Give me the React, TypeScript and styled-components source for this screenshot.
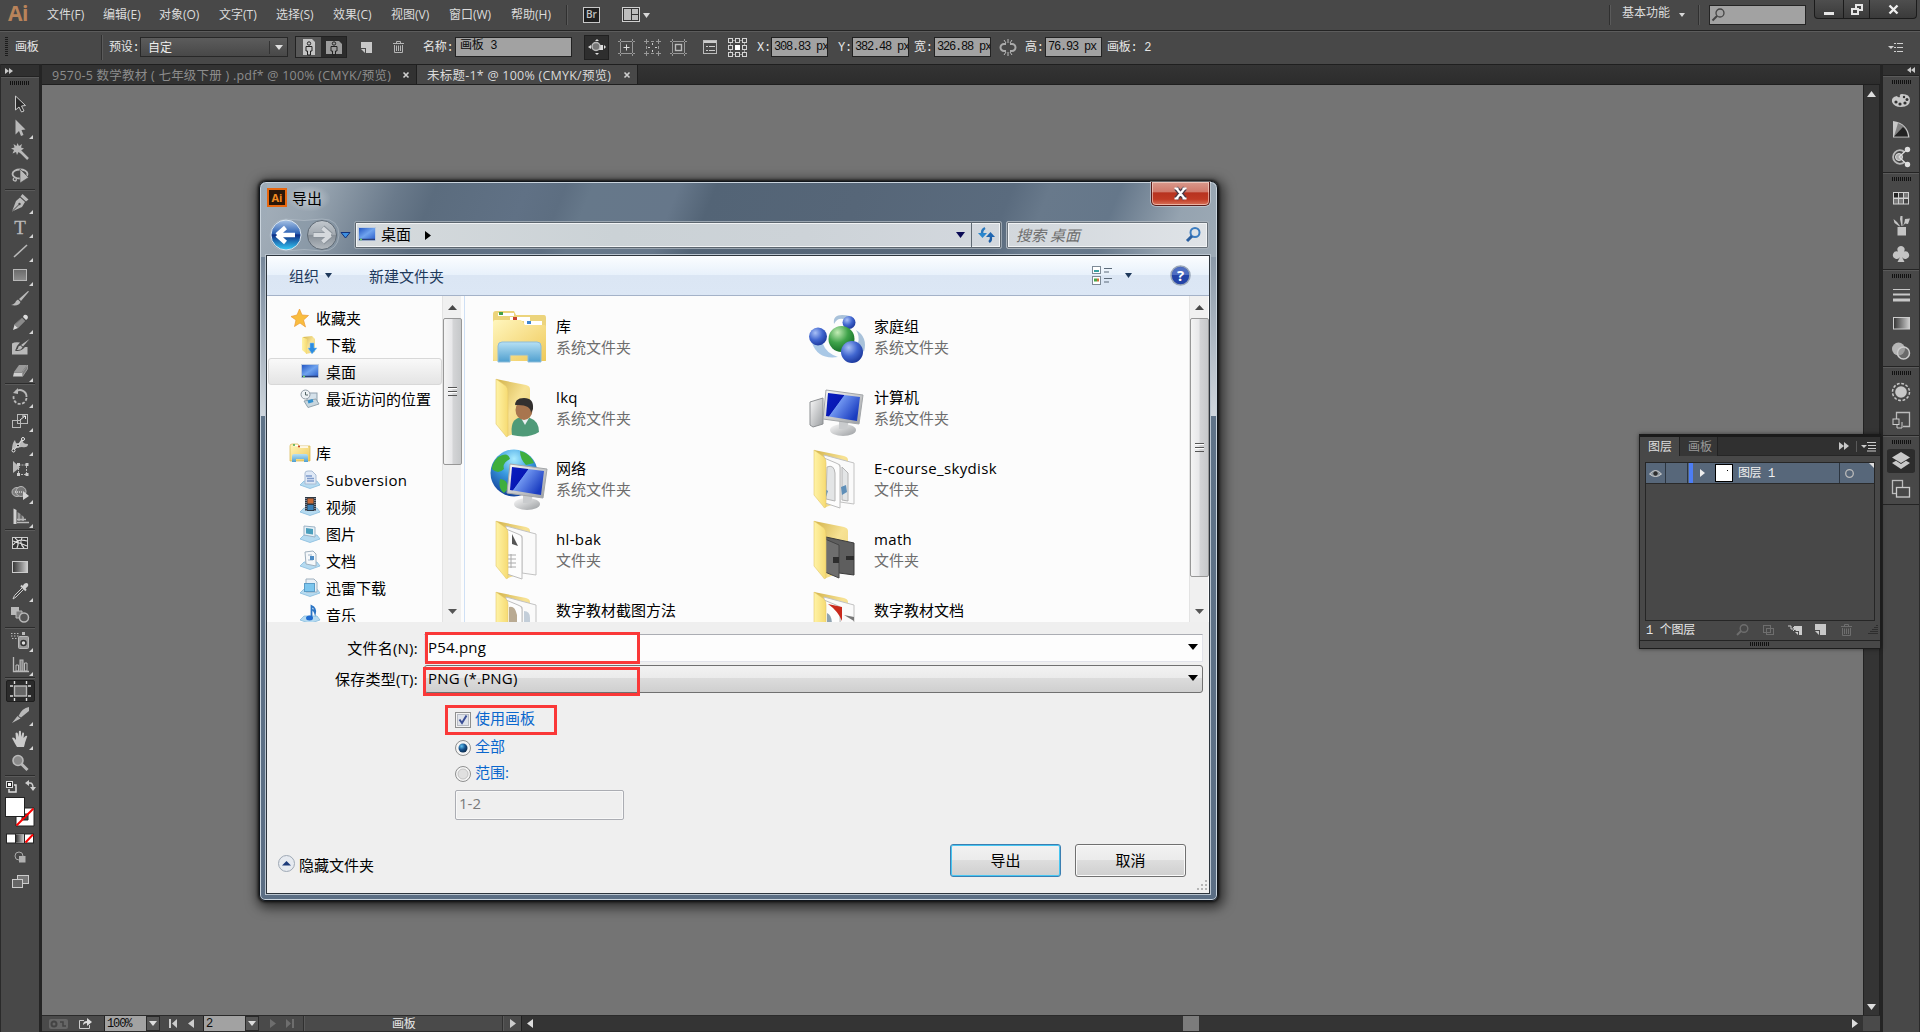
import React from "react";
import styled, { createGlobalStyle, css } from "styled-components";

const uiFont = `"Open Sans", "Noto Sans CJK SC", sans-serif`;
const pixelFont = `"Liberation Mono", "Noto Sans CJK SC", monospace`;

const GlobalStyle = createGlobalStyle`
  * { box-sizing: border-box; }
  html, body { margin: 0; padding: 0; background: #747474; overflow: hidden; }
  body { font-family: ${uiFont}; font-size: 12px; color: #d8d8d8; }
  svg { display: block; flex: none; overflow: visible; }
`;

/* ---------- shell ---------- */
const Shell = styled.div`
  width: 1920px;
  height: 1032px;
  display: flex;
  flex-direction: column;
  background: #474747;
  position: relative;
  overflow: hidden;
  white-space: nowrap;
`;
const MenuBar = styled.header`
  height: 31px;
  flex: none;
  display: flex;
  align-items: flex-start;
  background: #484848;
  border-bottom: 1px solid #242424;
`;
const Logo = styled.div`
  width: 47px;
  padding-left: 8px;
  font: 700 21px/27px "Open Sans", sans-serif;
  letter-spacing: -0.5px;
  color: #b9835a;
`;
const MenuItem = styled.div<{ $w: number; $lh?: number }>`
  width: ${(p) => p.$w}px;
  line-height: ${(p) => p.$lh ?? 30}px;
  font-size: 12px;
  color: #dcdcdc;
`;
const Divider = styled.div<{ $h?: number; $m?: string }>`
  width: 2px;
  flex: none;
  height: ${(p) => p.$h ?? 20}px;
  margin: ${(p) => p.$m ?? "0"};
  background: #303030;
  border-right: 1px solid #5a5a5a;
`;
const BridgeBadge = styled.div`
  width: 17px;
  height: 16px;
  margin: 7px 22px 0 15px;
  border: 1px solid #c8c8c8;
  background: #202020;
  color: #c4c4c4;
  font: 600 10px/13px "Open Sans", sans-serif;
  text-align: center;
`;
const Slot = styled.div<{ $w: number; $m?: string }>`
  width: ${(p) => p.$w}px;
  margin: ${(p) => p.$m ?? "0"};
  flex: none;
  display: flex;
  align-items: center;
`;
const Spacer = styled.div`
  flex: 1;
`;
const SearchBox = styled.div`
  width: 97px;
  height: 20px;
  margin: 5px 8px 0 9px;
  background: #a2a2a2;
  border: 1px solid #242424;
  padding: 2px 0 0 2px;
`;
const WindowControls = styled.div`
  width: 103px;
  height: 19px;
  margin-right: 3px;
  display: flex;
  border: 1px solid #1b1b1b;
  border-top: 0;
  border-radius: 0 0 4px 4px;
  background: linear-gradient(#4e4e4e, #3a3a3a);
`;
const WindowButton = styled.div<{ $w: number }>`
  width: ${(p) => p.$w}px;
  display: flex;
  align-items: center;
  justify-content: center;
  & + & {
    border-left: 1px solid #1b1b1b;
  }
`;

/* ---------- control bar ---------- */
const ControlBar = styled.div`
  height: 33px;
  flex: none;
  display: flex;
  align-items: center;
  padding: 0 0 2px 5px;
  border-top: 1px solid #5c5c5c;
  background: #484848;
`;
const Grip = styled.div<{ $v?: boolean }>`
  flex: none;
  ${(p) =>
    p.$v
      ? css`
          width: 3px;
          height: 20px;
          background: repeating-linear-gradient(#1c1c1c 0 1px, transparent 1px 2px);
        `
      : css`
          width: 20px;
          height: 4px;
          background: repeating-linear-gradient(90deg, #111 0 1px, transparent 1px 2px);
        `}
`;
const Label = styled.div<{ $w: number; $pl?: number }>`
  width: ${(p) => p.$w}px;
  padding-left: ${(p) => p.$pl ?? 0}px;
  padding-top: 2px;
  flex: none;
  font: 12px/16px ${pixelFont};
  letter-spacing: -0.3px;
  color: #e6e6e6;
`;
const Preset = styled.div`
  width: 148px;
  height: 20px;
  display: flex;
  align-items: center;
  border: 1px solid #282828;
  background: linear-gradient(#5c5c5c, #484848);
  color: #eee;
  padding-left: 7px;
  i {
    margin-left: auto;
    height: 13px;
    width: 18px;
    border-left: 1px solid #333;
    display: flex;
    align-items: center;
    justify-content: center;
  }
`;
const Field = styled.div<{ $w: number }>`
  width: ${(p) => p.$w}px;
  height: 20px;
  flex: none;
  border: 1px solid #222;
  background: #a2a2a2;
  color: #0c0c0c;
  font: 12px/18px ${pixelFont};
  letter-spacing: -1.2px;
  padding-left: 2px;
  overflow: hidden;
`;
const NameField = styled(Field)`
  padding-left: 4px;
  line-height: 17px;
  letter-spacing: -0.3px;
`;
const Orient = styled.div`
  width: 52px;
  height: 22px;
  margin: 0 14px 0 7px;
  display: flex;
  border: 1px solid #222;
  background: #2c2c2c;
  div {
    flex: 1;
    display: flex;
    align-items: center;
    justify-content: center;
  }
  div:first-child {
    background: #585858;
  }
`;
const DarkButton = styled.div`
  width: 25px;
  height: 25px;
  display: flex;
  align-items: center;
  justify-content: center;
  background: #2e2e2e;
  border: 1px solid #202020;
`;

/* ---------- body ---------- */
const Body = styled.div`
  flex: 1;
  min-height: 0;
  display: flex;
`;
const ToolColumn = styled.aside`
  width: 42px;
  flex: none;
  display: flex;
  flex-direction: column;
  border-left: 1px solid #2a2a2a;
  border-right: 3px solid #242424;
  background: #484848;
`;
const ColumnHead = styled.div<{ $right?: boolean }>`
  height: ${(p) => (p.$right ? 12 : 13)}px;
  flex: none;
  display: flex;
  align-items: center;
  justify-content: ${(p) => (p.$right ? "flex-end" : "flex-start")};
  padding: 0 4px;
  background: #303030;
  border-top: 1px solid #222;
  border-bottom: 1px solid #222;
`;
const GripRow = styled.div`
  height: 15px;
  flex: none;
  padding: 3px 0 0 9px;
  border-top: 1px solid #5a5a5a;
`;
const ToolCell = styled.div<{ $on?: boolean }>`
  height: 24px;
  flex: none;
  margin: 0 4px 0 5px;
  padding-right: 1px;
  display: flex;
  align-items: center;
  justify-content: center;
  position: relative;
  ${(p) => p.$on && "background:#2b2b2b; border:1px solid #1e1e1e; border-radius:2px; height:22px; margin-top:1px; margin-bottom:1px;"}
`;
const Corner = styled.i`
  position: absolute;
  right: 2px;
  bottom: 1px;
  border: 2px solid transparent;
  border-right-color: #d5d5d5;
  border-bottom-color: #d5d5d5;
`;
const ToolRule = styled.div<{ $h?: number }>`
  height: ${(p) => p.$h ?? 2}px;
  flex: none;
  margin: 0 4px;
  border-bottom: 1px solid #5a5a5a;
  background: linear-gradient(transparent calc(100% - 1px), #2c2c2c 0);
`;
const Center = styled.main`
  flex: 1;
  min-width: 0;
  display: flex;
  flex-direction: column;
`;
const TabStrip = styled.div`
  height: 21px;
  flex: none;
  display: flex;
  background: linear-gradient(#343434, #2c2c2c);
  border-top: 1px solid #1f1f1f;
  border-bottom: 1px solid #1f1f1f;
`;
const DocTab = styled.div<{ $w: number; $active?: boolean }>`
  width: ${(p) => p.$w}px;
  display: flex;
  align-items: center;
  justify-content: space-between;
  padding: 1px 7px 0 10px;
  border-right: 1px solid #1f1f1f;
  font-size: 12.5px;
  line-height: 17px;
  letter-spacing: 0.23px;
  color: ${(p) => (p.$active ? "#dadada" : "#8c8c8c")};
  background: ${(p) => (p.$active ? "#484848" : "#323232")};
`;
const Stage = styled.div`
  flex: 1;
  display: flex;
  min-height: 0;
`;
const Canvas = styled.div`
  flex: 1;
  background: #747474;
`;
const VScroll = styled.div`
  width: 17px;
  display: flex;
  flex-direction: column;
  justify-content: space-between;
  align-items: center;
  padding: 6px 0 5px;
  background: #343434;
  border: solid #222;
  border-width: 0 1px 0 1px;
`;
const StatusBar = styled.footer`
  height: 17px;
  flex: none;
  display: flex;
  align-items: center;
  border-top: 1px solid #2a2a2a;
  border-bottom: 1px solid #2a2a2a;
  background: #4a4a4a;
`;
const StatusField = styled.div`
  width: 42px;
  height: 15px;
  flex: none;
  background: #a2a2a2;
  border-left: 1px solid #222;
  color: #0c0c0c;
  font: 12px/16px ${pixelFont};
  letter-spacing: -1.1px;
  padding-left: 2px;
`;
const DropButton = styled.div`
  width: 14px;
  height: 15px;
  flex: none;
  display: flex;
  align-items: center;
  justify-content: center;
  background: #565656;
  border: 1px solid #2a2a2a;
`;
const HTrack = styled.div`
  flex: 1;
  height: 15px;
  display: flex;
  align-items: center;
  background: #343434;
  border-left: 1px solid #202020;
  padding: 0 5px;
`;
const HThumb = styled.div`
  width: 16px;
  height: 15px;
  margin-left: 650px;
  background: #7c7c7c;
`;

/* ---------- dock ---------- */
const Dock = styled.aside`
  width: 40px;
  flex: none;
  border-left: 3px solid #242424;
  border-right: 1px solid #2a2a2a;
  background: #484848;
`;
const DockGroup = styled.div`
  border-top: 1px solid #5a5a5a;
  border-bottom: 1px solid #242424;
  padding: 3px 0 1px;
`;
const DockGrip = styled.div`
  height: 7px;
  padding-left: 9px;
`;
const DockCell = styled.div<{ $on?: boolean }>`
  height: 28px;
  padding: 2px 0;
  margin: 0 4px;
  display: flex;
  align-items: center;
  justify-content: center;
  border-radius: 4px;
  background: ${(p) => (p.$on ? "#2c2c2c content-box" : "none")};
`;

/* ---------- layers panel ---------- */
const LayersPanel = styled.section`
  position: absolute;
  left: 1639px;
  top: 434px;
  width: 242px;
  height: 215px;
  display: flex;
  flex-direction: column;
  background: #484848;
  border: 1px solid #1c1c1c;
  border-top: 3px solid #1a1a1a;
  box-shadow: 0 0 4px rgba(0, 0, 0, 0.5);
`;
const PanelTabs = styled.div`
  height: 19px;
  flex: none;
  display: flex;
  align-items: center;
  background: #303030;
  border-bottom: 1px solid #262626;
  padding-right: 4px;
`;
const PanelTab = styled.div<{ $w: number; $on?: boolean }>`
  width: ${(p) => p.$w}px;
  height: 19px;
  padding-left: 8px;
  line-height: 20px;
  font-size: 12px;
  border-right: 1px solid #222;
  color: ${(p) => (p.$on ? "#dedede" : "#9a9a9a")};
  background: ${(p) => (p.$on ? "#484848" : "#363636")};
`;
const LayerList = styled.div`
  height: 159px;
  flex: none;
  margin: 6px 5px 0 5px;
  border: 1px solid #262626;
`;
const LayerRow = styled.div`
  height: 21px;
  display: flex;
  align-items: center;
  background: #57677a;
  border-bottom: 1px solid #2a2a2a;
  color: #f0f0f0;
`;
const LayerCol = styled.div<{ $w: number; $line?: boolean }>`
  width: ${(p) => p.$w}px;
  height: 20px;
  flex: none;
  display: flex;
  align-items: center;
  justify-content: center;
  border-right: ${(p) => (p.$line ? "1px solid #2c3540" : "0")};
`;
const LayerColor = styled.div`
  width: 4px;
  height: 20px;
  margin: 0 1px;
  background: #4c7df5;
`;
const Thumb = styled.div`
  width: 18px;
  height: 18px;
  background: #fff;
  border: 1px solid #000;
  padding: 5px 0 0 11px;
  &::after {
    content: "";
    display: block;
    width: 1px;
    height: 1px;
    background: #000;
  }
`;
const LayerName = styled.div`
  width: 100px;
  padding: 2px 0 0 5px;
  font: 12px/17px ${pixelFont};
  letter-spacing: -0.4px;
`;
const PanelFoot = styled.div`
  height: 19px;
  flex: none;
  display: flex;
  align-items: center;
  padding: 0 2px 2px 6px;
`;
const PanelGrip = styled.div`
  flex: 1;
  border-top: 1px solid #242424;
  padding: 1px 0 0 110px;
`;

/* ---------- export dialog ---------- */
const Dialog = styled.section`
  position: absolute;
  left: 259px;
  top: 181px;
  width: 959px;
  height: 720px;
  display: flex;
  flex-direction: column;
  padding: 0 4px;
  border: 1px solid #10151b;
  border-radius: 7px 7px 6px 6px;
  color: #000;
  font-size: 15px;
  box-shadow: inset 0 0 0 1px #c9d3dc, 0 0 3px 1px rgba(0, 0, 0, 0.8), 2px 3px 12px 4px rgba(0, 0, 0, 0.6);
  background:
    linear-gradient(#9dabb8 0, rgba(157, 171, 184, 0) 60px) 0 0 / 7px 75px no-repeat,
    linear-gradient(#76879a, #cfd6dd) 0 75px / 7px 159px no-repeat,
    linear-gradient(#8b99a8, #cfd6dd) 100% 75px / 8px 159px no-repeat,
    linear-gradient(#5f7388, #5b6e84) 0 234px / 100% 500px no-repeat,
    linear-gradient(112deg, #a5b0bb 0, #96a3af 60px, #6a7a8b 130px, #5b6c7e 165px, #607185 250px, #5d6e81 285px, #66788a 310px, #66778a 390px, #536476 425px, #566678 560px, #5a6b7e 700px, #68798b 735px, #65778a 800px, #95a3b0 865px, #a4b0ba 960px);
`;
const TitleRow = styled.div`
  height: 37px;
  flex: none;
  display: flex;
  align-items: flex-start;
  padding: 0 3px 0 3px;
`;
const AppBadge = styled.div`
  width: 20px;
  height: 19px;
  margin-top: 6px;
  background: #2a1709;
  border: 2px solid #e8670f;
  color: #f28c22;
  font: 700 11px/15px "Open Sans", sans-serif;
  text-align: center;
`;
const TitleText = styled.div`
  margin: 4px 0 0 1px;
  padding: 0 8px 0 4px;
  line-height: 25px;
  border-radius: 12px;
  background: radial-gradient(ellipse, rgba(255, 255, 255, 0.42), rgba(255, 255, 255, 0) 75%);
`;
const CloseButton = styled.div`
  width: 59px;
  height: 24px;
  margin-left: auto;
  display: flex;
  align-items: center;
  justify-content: center;
  border: 1px solid #5b1c1a;
  border-top: 0;
  border-radius: 0 0 5px 5px;
  box-shadow: inset 0 0 0 1px rgba(255, 235, 225, 0.55), 0 0 0 1px rgba(255, 255, 255, 0.35);
  background: linear-gradient(#d9998c 0, #cf7768 45%, #b7321f 46%, #c03a24 75%, #d8735a 100%);
`;
const NavRow = styled.div`
  height: 36px;
  flex: none;
  display: flex;
  align-items: center;
  padding-bottom: 4px;
`;
const Address = styled.div`
  width: 648px;
  height: 28px;
  margin-left: 1px;
  display: flex;
  align-items: center;
  border: 1px solid #9aa5b0;
  box-shadow: inset 0 0 0 1px #5c666f, inset 0 0 0 2px #f1f3f5;
  background: linear-gradient(90deg, #d5dadd 0, #cbd2d6 40%, #cdd3d8 70%, #d3d8de);
  padding-left: 2px;
  border-radius: 2px;
`;
const AddressText = styled.div`
  width: 44px;
  margin-left: 4px;
  padding-bottom: 3px;
`;
const Refresh = styled.div`
  width: 30px;
  height: 26px;
  display: flex;
  align-items: center;
  justify-content: center;
  border-left: 1px solid #606a73;
`;
const SearchField = styled.div`
  flex: 1;
  height: 28px;
  margin: 0 4px 0 4px;
  display: flex;
  align-items: center;
  justify-content: space-between;
  padding: 0 7px 1px 9px;
  border: 1px solid #aab3bc;
  box-shadow: inset 0 0 0 1px #6a737c, inset 0 0 0 2px #f1f3f5;
  background: linear-gradient(90deg, #d2d7dc, #dfe3e7);
  color: #6e6e6e;
  font-style: italic;
  border-radius: 2px;
`;
const Client = styled.div`
  height: 639px;
  flex: none;
  display: flex;
  flex-direction: column;
  margin: 0 3px 0 2px;
  border: 1px solid #2c343c;
  outline: 1px solid #b9c4cf;
  background: #efefef;
`;
const CommandBar = styled.div`
  height: 40px;
  flex: none;
  display: flex;
  align-items: center;
  padding: 0 19px 0 22px;
  color: #1e395b;
  background: linear-gradient(#fbfdff 0, #e8f1fb 48%, #dbe6f4 49%, #dce7f5 100%);
  border-bottom: 1px solid #a4b2c8;
`;
const Explorer = styled.div`
  height: 326px;
  flex: none;
  display: flex;
  background: #fcfcfc;
  overflow: hidden;
`;
const NavPane = styled.div`
  width: 176px;
  flex: none;
  padding: 8px 1px 0 1px;
`;
const NavItem = styled.div<{ $root?: boolean; $on?: boolean; $top?: number }>`
  height: 27px;
  margin-top: ${(p) => p.$top ?? 0}px;
  display: flex;
  align-items: center;
  gap: 6px;
  padding-left: ${(p) => (p.$root ? 21 : 31)}px;
  border-radius: 3px;
  border: 1px solid ${(p) => (p.$on ? "#d8d8d8" : "transparent")};
  background: ${(p) => (p.$on ? "linear-gradient(#f9f9f9,#e4e4e4)" : "none")};
`;
const Name = styled.div<{ $latin: boolean }>`
  letter-spacing: ${(p) => (p.$latin ? "0.35px" : "0")};
`;
const ScrollBar = styled.div`
  width: 19px;
  flex: none;
  display: flex;
  flex-direction: column;
  align-items: center;
  background: #f0f0f0;
  border-left: 1px solid #e3e3e3;
  margin-left: -1px;
  margin-right: 1px;
`;
const ScrollArrow = styled.div`
  height: 22px;
  display: flex;
  align-items: center;
`;
const ScrollThumb = styled.div<{ $h: number }>`
  height: ${(p) => p.$h}px;
  width: 19px;
  flex: none;
  display: flex;
  align-items: center;
  justify-content: center;
  border: 1px solid #979797;
  border-radius: 2px;
  background: linear-gradient(90deg, #f4f4f4 0, #e8e8ea 45%, #d3d4d6 55%, #c6c8ca 100%);
`;
const FilePane = styled.div`
  flex: 1;
  margin-left: 2px;
  border-left: 1px solid #cfe0f5;
  display: grid;
  grid-template-columns: 318px 1fr;
  grid-auto-rows: 71px;
  padding: 6px 0 0 20px;
`;
const FileItem = styled.div`
  display: flex;
  height: 71px;
  padding-top: 5px;
`;
const FileText = styled.div`
  margin-left: 8px;
  padding-top: 9px;
  line-height: 21px;
`;
const Kind = styled.div`
  color: #6d6d6d;
`;
const Form = styled.div`
  flex: 1;
  padding: 12px 6px 0 0;
  display: flex;
  flex-direction: column;
`;
const FormRow = styled.div`
  display: flex;
  height: 31px;
  align-items: flex-start;
`;
const FormLabel = styled.div`
  width: 151px;
  margin-right: 6px;
  line-height: 28px;
  letter-spacing: 0.25px;
  text-align: right;
`;
const Combo = styled.div<{ $shaded?: boolean }>`
  flex: 1;
  height: 28px;
  display: flex;
  align-items: center;
  justify-content: space-between;
  padding: 0 4px 2px 3px;
  letter-spacing: 0.2px;
  position: relative;
  ${(p) =>
    p.$shaded
      ? css`
          border: 1px solid #707070;
          border-radius: 3px;
          background: linear-gradient(#f2f2f2 0, #ebebeb 46%, #dcdcdc 47%, #cfcfcf 100%);
        `
      : css`
          border: 1px solid #e2e3ea;
          border-top-color: #abadb3;
          background: #fdfdfd;
        `}
`;
const Mark = styled.span<{ $x: number; $y: number; $w: number; $h: number }>`
  position: absolute;
  left: ${(p) => p.$x}px;
  top: ${(p) => p.$y}px;
  width: ${(p) => p.$w}px;
  height: ${(p) => p.$h}px;
  border: 3px solid #fa3838;
`;
const Options = styled.div`
  padding: 12px 0 0 188px;
  display: flex;
  flex-direction: column;
  align-items: flex-start;
`;
const Option = styled.div<{ $h: number }>`
  height: ${(p) => p.$h}px;
  display: flex;
  align-items: flex-start;
  gap: 4px;
  color: #0a67cd;
  line-height: 20px;
  position: relative;
  svg {
    margin-top: 4px;
  }
`;
const RangeInput = styled.div`
  width: 169px;
  height: 30px;
  margin-top: 1px;
  border: 1px solid #abadb3;
  border-radius: 2px;
  box-shadow: inset 0 0 0 1px #f8f8f8;
  color: #7a7a7a;
  line-height: 25px;
  padding-left: 3px;
`;
const Actions = styled.div`
  display: flex;
  margin-top: 24px;
  padding: 0 17px 0 11px;
  align-items: flex-start;
`;
const HideToggle = styled.div`
  display: flex;
  align-items: center;
  gap: 4px;
  padding-top: 10px;
  margin-right: auto;
  line-height: 22px;
  svg {
    margin-top: -3px;
  }
`;
const PushButton = styled.div<{ $primary?: boolean }>`
  width: 111px;
  height: 33px;
  margin-left: 14px;
  line-height: 30px;
  text-align: center;
  border-radius: 3px;
  border: 1px solid ${(p) => (p.$primary ? "#3c7fb1" : "#707070")};
  box-shadow: inset 0 0 0 1px ${(p) => (p.$primary ? "#47c6f2" : "#fafafa")};
  background: linear-gradient(#f2f2f2 0, #ebebeb 49%, #dddddd 50%, #cfcfcf 100%);
`;
const SizeGrip = styled.div`
  display: flex;
  justify-content: flex-end;
  margin: 3px -5px 0 0;
`;

/* ---------- icons ---------- */
type IconProps = { w?: number; h?: number; vb?: string; children: React.ReactNode };
const Icon = ({ w = 20, h = 20, vb, children }: IconProps) => (
  <svg width={w} height={h} viewBox={vb ?? `0 0 ${w} ${h}`} fill="none" stroke="none">
    {children}
  </svg>
);
const Tri = ({ dir = "down", s = 7, c = "#d8d8d8" }: { dir?: "down" | "up" | "left" | "right"; s?: number; c?: string }) => {
  const h = Math.ceil(s / 2) + 1;
  const v = dir === "left" || dir === "right";
  const d = {
    down: `M0 0H${s}L${s / 2} ${h}Z`,
    up: `M0 ${h}H${s}L${s / 2} 0Z`,
    left: `M${h} 0V${s}L0 ${s / 2}Z`,
    right: `M0 0V${s}L${h} ${s / 2}Z`,
  }[dir];
  return (
    <Icon w={v ? h : s} h={v ? s : h}>
      <path d={d} fill={c} />
    </Icon>
  );
};
const Cross = ({ s = 7, c = "#d0d0d0", w = 1.6 }) => (
  <Icon w={s} h={s}>
    <path d={`M.5 .5L${s - 0.5} ${s - 0.5}M${s - 0.5} .5L.5 ${s - 0.5}`} stroke={c} strokeWidth={w} />
  </Icon>
);
const G = "#b9b9b9";

const Defs = styled.svg`
  position: absolute;
`;
const Gradients = () => (
  <Defs width="0" height="0">
    <defs>
      <linearGradient id="gFolder" x1="0" y1="0" x2="1" y2="1"><stop offset="0" stopColor="#fff6bd" /><stop offset="1" stopColor="#efc95a" /></linearGradient>
      <linearGradient id="gFlap" x1="0" y1="0" x2="1" y2="0"><stop offset="0" stopColor="#fff3a6" /><stop offset="1" stopColor="#f6db73" /></linearGradient>
      <linearGradient id="gBack" x1="0" y1="0" x2="1" y2="1"><stop offset="0" stopColor="#d2b24a" /><stop offset=".5" stopColor="#f7e294" /><stop offset="1" stopColor="#ecd27a" /></linearGradient>
      <linearGradient id="gBlueTray" x1="0" y1="0" x2="0" y2="1"><stop offset="0" stopColor="#b6e0f4" /><stop offset="1" stopColor="#4f9fcf" /></linearGradient>
      <linearGradient id="gScreen" x1="0" y1="0" x2="1" y2=".6"><stop offset="0" stopColor="#0a1ec0" /><stop offset=".42" stopColor="#0718b4" /><stop offset=".44" stopColor="#6f95f0" /><stop offset="1" stopColor="#1a3cc0" /></linearGradient>
      <linearGradient id="gSky" x1="0" y1="0" x2="1" y2="1"><stop offset="0" stopColor="#2357c4" /><stop offset=".5" stopColor="#6fa3ee" /><stop offset="1" stopColor="#2c5fcb" /></linearGradient>
      <linearGradient id="gSilver" x1="0" y1="0" x2="1" y2="1"><stop offset="0" stopColor="#fafafa" /><stop offset="1" stopColor="#9a9da0" /></linearGradient>
      <linearGradient id="gGrey" x1="0" y1="0" x2="1" y2="0"><stop offset="0" stopColor="#333" /><stop offset="1" stopColor="#cfcfcf" /></linearGradient>
      <linearGradient id="gTool" x1="0" y1="0" x2="0" y2="1"><stop offset="0" stopColor="#6a6a6a" /><stop offset="1" stopColor="#8d8d8d" /></linearGradient>
      <linearGradient id="gBackBtn" x1="0" y1="0" x2="0" y2="1"><stop offset="0" stopColor="#a9c4e6" /><stop offset=".45" stopColor="#2d62b4" /><stop offset=".5" stopColor="#0f2f86" /><stop offset="1" stopColor="#35cdf8" /></linearGradient>
      <linearGradient id="gFwdBtn" x1="0" y1="0" x2="0" y2="1"><stop offset="0" stopColor="#c3c9cf" /><stop offset=".48" stopColor="#a2a9b0" /><stop offset=".5" stopColor="#878f97" /><stop offset="1" stopColor="#b4bac0" /></linearGradient>
      <radialGradient id="gBall" cx=".35" cy=".3" r=".8"><stop offset="0" stopColor="#a8c0f6" /><stop offset=".5" stopColor="#4166cf" /><stop offset="1" stopColor="#142f93" /></radialGradient>
      <radialGradient id="gGreen" cx=".35" cy=".25" r=".8"><stop offset="0" stopColor="#c2ecb5" /><stop offset=".5" stopColor="#3fa34a" /><stop offset="1" stopColor="#126a25" /></radialGradient>
      <radialGradient id="gGlobe" cx=".5" cy=".2" r=".9"><stop offset="0" stopColor="#a9ecff" /><stop offset=".4" stopColor="#3a9be0" /><stop offset="1" stopColor="#0b2f8c" /></radialGradient>
      <radialGradient id="gRadio" cx=".35" cy=".3" r=".8"><stop offset="0" stopColor="#5fc0f0" /><stop offset=".5" stopColor="#14508c" /><stop offset="1" stopColor="#0a2340" /></radialGradient>
    </defs>
  </Defs>
);

const tools: { i?: React.ReactNode; more?: boolean; on?: boolean; rule?: number }[] = [
  { i: <path d="M5.500 2V16L9 13L11.500 18L14 17L11.500 12L15.500 11.500Z" fill="#2c2c2c" stroke="#c9c9c9" /> },
  { i: <path d="M5.500 1.500V16.500L9 13L11 18L13.500 17L11.500 12L15.500 11.500Z" fill={G} />, more: true },
  { i: <><path d="M7.500 1L9 4L12 2L11 5.500L14 6.500L11 8.500L12 12L8.500 10L7 13L6 10L2.500 11.500L4 8L1 6.500L4.500 5.500L3.500 2L6.500 4Z" fill={G} /><path d="M10 9L18 17" stroke={G} strokeWidth="2.500" /></> },
  { i: <><ellipse cx="10" cy="8" rx="7.500" ry="4.500" stroke={G} strokeWidth="1.800" /><path d="M4 12Q2 14 5 15Q7 15 6 12" stroke={G} strokeWidth="1.300" /><path d="M10 3V17L18.500 11.500Z" fill={G} stroke="#484848" strokeWidth=".6" /></> },
  { rule: 3 },
  { i: <><path d="M12.500 1L18.500 6.500L16 8.500L10.500 3.500ZM10 4.500L15 9L12 14L2 18.500L6 8Z" fill={G} /><path d="M2.500 18L9 11.500" stroke="#484848" /><circle cx="9.500" cy="11" r="1.200" fill="#484848" /></>, more: true },
  { i: <text x="10" y="16.500" textAnchor="middle" fontFamily="Liberation Serif" fontSize="19" fill={G} stroke={G} strokeWidth=".3">T</text>, more: true },
  { i: <path d="M4 16L17 4" stroke={G} strokeWidth="1.600" />, more: true },
  { i: <rect x="3.500" y="4.500" width="13" height="11" fill="url(#gTool)" stroke={G} />, more: true },
  { i: <path d="M19 2.500L11 12L9 10L18 2ZM8 10.500L10.500 13Q9 17.500 1 16Q5 15 6 12Z" fill={G} /> },
  { i: <><path d="M14 2Q17 1 18 4Q18 6 16 7L13 4Z" fill="#dcdcdc" /><path d="M12 5L15 8L8 15L4 12Z" fill="#8a8a8a" stroke="#777" /><path d="M4.500 12L8 15L3 17Z" fill="#dcdcdc" /></>, more: true },
  { i: <><path d="M2 6.500Q5 4.500 10 5.500L7 9Q6 12 5 13.500Q9 15 13 12L15 10H17.500V17.500H2Z" fill={G} /><path d="M19.500 2L13 9.500L11 8ZM10.500 8.500L12.500 10.500Q11 13.500 6.500 13Q8.500 11.500 8.500 9.500Z" fill={G} /></> },
  { i: <><path d="M9 4H17L12 11H4Z" fill="#9a9a9a" /><path d="M4 11.500H12V15.500H3Z" fill="#cfcfcf" /><path d="M12.500 11L17.500 4V8L12.500 15.500Z" fill="#7c7c7c" stroke={G} strokeWidth=".6" /></>, more: true },
  { rule: 2 },
  { i: <><path d="M6 4.500A6.500 6.500 0 0 1 16.500 10" stroke={G} strokeWidth="1.800" /><path d="M16.500 11A6.500 6.500 0 1 1 4 8" stroke={G} strokeWidth="1.800" strokeDasharray="3 1.500" /><path d="M3 6L8 1V7Z" fill={G} /></>, more: true },
  { i: <><rect x="7.500" y="3.500" width="10" height="9" stroke={G} /><rect x="2.500" y="9.500" width="8" height="7" stroke={G} /><path d="M10 9L15 5M12 5H15.500V8" stroke="#eee" /></>, more: true },
  { i: <><path d="M2 15Q2 8 5 5Q6 10 9 8Q11 3 13 5Q12 9 18 9Q18 13 12 12Q8 12 2 15Z" fill={G} /><path d="M4 15L13 4" stroke="#ddd" /><circle cx="3.500" cy="15.500" r="1.500" fill="#333" stroke="#eee" /><circle cx="8" cy="10.500" r="1.500" fill="#333" stroke="#eee" /><circle cx="13" cy="4" r="1.500" fill="#333" stroke="#eee" /></>, more: true },
  { i: <><path d="M3 2V14L10 8.500Z" fill={G} /><rect x="8.500" y="6" width="8" height="9.500" stroke={G} strokeDasharray="2 1" /><path d="M7 4H10V7H7ZM15.500 4H18.500V7H15.500ZM7 14H10V17H7ZM15.500 14H18.500V17H15.500Z" fill="#ccc" /></> },
  { i: <><ellipse cx="7" cy="9" rx="5" ry="4.500" fill="#7d7d7d" stroke={G} /><circle cx="11" cy="8.500" r="5" fill="#777" stroke={G} /><path d="M5 9H13" stroke="#fff" strokeDasharray="1 1" /><path d="M13 8V17L19 13Z" fill="#d5d5d5" /></>, more: true },
  { i: <><path d="M3.500 1.500V17H6.500V3Z" fill="#d0d0d0" /><path d="M7.500 5V14H10.500V7ZM11.500 8V14H14V10Z" fill="#9a9a9a" /><path d="M7 15.500H19M7 12.500H16" stroke={G} strokeWidth="1.500" /></>, more: true },
  { rule: 2 },
  { i: <><rect x="2.500" y="4.500" width="15" height="11" fill="#333" stroke="#ccc" /><path d="M3 12Q8 5 17 8M5 5Q10 8 7 15M12 5Q9 10 14 15M3 8Q10 10 17 13" stroke="#e0e0e0" strokeWidth="1.200" /></> },
  { i: <rect x="2.500" y="4.500" width="15" height="11" fill="url(#gGrey)" stroke="#ccc" /> },
  { i: <><path d="M12.500 5.500L14 3Q17 1 18 3Q19 5 16 7L15 9Z" fill="#d0d0d0" /><path d="M11 4.500L16 9.500" stroke="#d0d0d0" strokeWidth="2" /><path d="M12 7L4.500 14.500L3 18L6 16L13.500 8.500" stroke="#ccc" /></>, more: true },
  { i: <><rect x="1" y="2" width="8" height="8" fill={G} /><path d="M6 6H12V13H6Z" fill="#7c7c7c" stroke={G} /><circle cx="14" cy="12.500" r="4.500" fill="#555" stroke={G} strokeWidth="1.500" /></> },
  { rule: 2 },
  { i: <><path d="M1 2.500H10M1 5H10M2 7.500H7" stroke={G} strokeDasharray="1.500 1.500" /><path d="M12 1H15V4H12Z" fill={G} /><rect x="8.500" y="5.500" width="10" height="12" rx="1" fill="#999" stroke={G} /><circle cx="13.500" cy="12" r="2.500" fill="#ddd" stroke="#333" strokeWidth="1.500" /></>, more: true },
  { i: <><path d="M3.500 2V16.500H19" stroke={G} strokeWidth="1.300" /><path d="M6 10H8.500V16H6ZM14.500 8H17V16H14.500Z" stroke={G} /><rect x="10" y="5" width="3" height="11" fill="#888" stroke={G} /></>, more: true },
  { rule: 2 },
  { i: <><rect x="4.500" y="5" width="12" height="10" fill="#666" stroke={G} strokeWidth="1.400" /><path d="M0 5H3M0 15H3M18 5H21M18 15H21M4.500 0V3M16.500 0V3M4.500 17V20M16.500 17V20" stroke="#ddd" strokeWidth="1.400" /></>, on: true },
  { i: <path d="M19 2Q12 3 8.500 11L11 12.500L19 6ZM7.500 11L10.500 13.500L2 18Z" fill={G} />, more: true },
  { i: <path d="M2 9Q3.500 7.500 6 11L5.500 4Q7.500 2.500 8 5L8.500 8L9 2Q11 1 11 3V8L12.500 3.500Q14.500 3 14 5L13.500 9L15.500 7Q18 6 17 8Q15 13 14 18H7Q5 15 2 9Z" fill="#cacaca" />, more: true },
  { i: <><circle cx="8" cy="7.500" r="5" fill="#8a8a8a" stroke={G} strokeWidth="1.600" /><path d="M11.500 11L17.500 17" stroke={G} strokeWidth="3" /></> },
  { rule: 2 },
];

const dockGroups: { i: React.ReactNode; on?: boolean }[][] = [
  [
    { i: <><path d="M1 11Q0 6 6 5Q7 7 9 6Q8 3 11 3Q19 3 19 9Q19 16 10 16Q3 16 1 11Z" fill="#c8c8c8" /><g fill="#333"><circle cx="5" cy="11" r="1.600" /><circle cx="9" cy="13" r="1.600" /><circle cx="14" cy="12" r="1.600" /><circle cx="16" cy="8.500" r="1.500" /><circle cx="13" cy="6" r="1.200" /></g></> },
    { i: <><path d="M2 2V18.500H18.500Q17 4 2 2Z" fill="#c8c8c8" /><path d="M3 17.500L7 4Q16 7 17 17.500Z" fill="#808080" /><path d="M3 17.500L12 8Q16 11 17 17.500Z" fill="#222" /></> },
    { i: <><path d="M13.500 5A6.800 6.800 0 1 0 13.500 15" stroke={G} strokeWidth="1.800" /><circle cx="8" cy="10" r="3.500" fill="#aaa" stroke="#ddd" /><path d="M8 10L16 2.500M8 10L16 17.500" stroke="#ddd" strokeWidth="1.200" /><circle cx="16.500" cy="2.500" r="2.700" fill="#ddd" /><circle cx="16.500" cy="17.500" r="2.700" fill="#ddd" /></> },
  ],
  [
    { i: <><rect x="2" y="4" width="16" height="12.500" fill="#d0d0d0" /><path d="M3 5H7V9.500H3Z" fill="#222" /><path d="M8 5H12V9.500H8ZM13 11H17V15.500H13Z" fill="#444" /><path d="M13 5H17V9.500H13ZM3 11H7V15.500H3ZM8 11H12V15.500H8Z" fill="#777" /></> },
    { i: <><rect x="6.500" y="11" width="8.500" height="8.500" fill="#c4c4c4" /><path d="M8.500 10.500L3.500 7L2.500 3L6 6L9 10ZM10.500 10L9 3L9.500 0H11.500V10ZM12 10L13.500 6L14 3L19 2.500L17 8L14 7.500Z" fill="#c4c4c4" /></> },
    { i: <path d="M10 2A3.500 3.500 0 0 1 13 7.500A3.800 3.800 0 1 1 11 13L13.500 18H6.500L9 13A3.800 3.800 0 1 1 7 7.500A3.500 3.500 0 0 1 10 2Z" fill="#c4c4c4" /> },
  ],
  [
    { i: <><path d="M2 4.500H19" stroke="#c8c8c8" /><path d="M2 9.500H19" stroke="#c8c8c8" strokeWidth="2" /><path d="M2 15H19" stroke="#c8c8c8" strokeWidth="3" /></> },
    { i: <rect x="2.500" y="4.500" width="16" height="11.500" fill="url(#gGrey)" stroke="#ccc" /> },
    { i: <><circle cx="7.500" cy="8" r="6.500" fill="#b5b5b5" /><circle cx="12.500" cy="12" r="6" fill="#8888" stroke="#ccc" strokeWidth="1.500" /></> },
  ],
  [
    { i: <><circle cx="10" cy="10" r="5.800" fill="#c8c8c8" /><circle cx="10" cy="10" r="8.500" stroke="#c8c8c8" strokeWidth="1.500" strokeDasharray="2.800 1.650" /></> },
    { i: <><path d="M5.500 9V2.500H18.500V16.500H12" stroke="#bbb" strokeWidth="1.300" /><path d="M6 12V18H11V12" stroke="#ccc" /><rect x="2" y="9" width="6" height="5.500" stroke="#ccc" fill="#484848" /></> },
  ],
  [
    { i: <><path d="M10 1L19 6.500L10 12L1 6.500Z" fill="#c8c8c8" /><path d="M1 12L5 9.800L10 13L15 9.800L19 12L10 18Z" fill="#c8c8c8" /></>, on: true },
    { i: <><rect x="1.500" y="1.500" width="10" height="13" stroke="#bbb" strokeWidth="1.300" /><rect x="5.500" y="8.500" width="13" height="9.500" fill="#484848" stroke="#ccc" strokeWidth="1.300" /></> },
  ],
];

const LibraryIcon = () => (
  <Icon w={56} h={56}>
    <path d="M3 7Q3 4 6 4H24L26 8H54Q56 8 56 11V54H3Z" fill="#ecd47c" />
    <path d="M8 6H24V9H8Z" fill="#fff" /><rect x="9" y="5" width="4" height="3" fill="#44a048" />
    <path d="M20 10H40V14H20Z" fill="#fff" /><rect x="23" y="10" width="4" height="3" fill="#c8432e" />
    <path d="M34 14H52V18H34Z" fill="#fff" /><rect x="37" y="14" width="4" height="3" fill="#3e86cf" />
    <path d="M3 15Q3 13 5 13H31L35 18H54Q56 18 56 20V53Q56 54 54 54H5Q3 54 3 52Z" fill="url(#gFolder)" />
    <path d="M8 55V39Q8 35 12 35H47Q51 35 51 39V55H38V48H20V55Z" fill="url(#gBlueTray)" stroke="#8dbcd9" />
  </Icon>
);
const FolderIcon = ({ kind }: { kind: "user" | "docs" | "text" | "dark" | "photos" | "red" }) => (
  <Icon w={56} h={60}>
    <path d="M6 1L36 7Q40 8 40 11V50L18 58Z" fill="url(#gBack)" />
    {kind !== "user" && kind !== "dark" && (
      <>
        <path d="M16 6L46 14V55L32 53V16L16 12Z" fill="#fafafa" stroke="#c2c2c2" />
        <path d="M16 9L28 14Q32 15 32 18V59L17 54Z" fill="#fdfdfd" stroke="#bdbdbd" />
      </>
    )}
    {kind === "text" && <><path d="M22 14L28 26L22 24Z" fill="#555" /><path d="M17 35H26M17 39H26M17 43H26M17 47H26M21 34V48" stroke="#aaa" /></>}
    {kind === "docs" && <><path d="M19 18Q26 15 27 24V52L18 50ZM34 18L40 24V52L34 51Z" fill="#e3e5e6" stroke="#b4b4b4" /><path d="M33 38L38 36L39 43L34 46ZM17 40L20 42L18 48Z" fill="#5f8fb8" /></>}
    {kind === "photos" && <><path d="M19 16Q25 14 27 24V52H19Z" fill="#b9aa92" /><path d="M34 20Q40 20 40 27V52H34Z" fill="#c3ced9" /></>}
    {kind === "red" && <><path d="M20 13L34 16V30Q30 20 20 13Z" fill="#c9291c" /><path d="M19 22Q24 24 24 34V52H19Z" fill="#8fa3b0" /><path d="M36 24L46 30V26Z" fill="#777" /></>}
    {kind === "dark" && <><path d="M18 17L46 23V55L31 53L18 45Z" fill="#5e5e5e" stroke="#3c3c3c" /><path d="M17 19L31 25V58L17 52Z" fill="#6e6e6e" stroke="#444" /><path d="M25 37H31V43H25ZM38 36H46V40H38Z" fill="#2d2d2d" /></>}
    <path d="M6 1L16 8Q18 10 18 14V58Q16 60 15 57L6 46Z" fill="url(#gFlap)" stroke="#e4c768" strokeWidth=".6" />
    {kind === "user" && (
      <>
        <path d="M22 57Q20 43 28 40H40Q49 43 49 54Q38 61 22 57Z" fill="#4f9a78" />
        <path d="M31 40L35 47L39 40Z" fill="#e9eef0" />
        <ellipse cx="34" cy="32" rx="8.500" ry="10" fill="#a8754e" />
        <path d="M25 29Q24 20 34 20Q44 20 43 31L41 35Q41 26 25 27Z" fill="#33302f" />
      </>
    )}
  </Icon>
);
const GroupIcon = () => (
  <Icon w={58} h={60}>
    <path d="M26 17Q24 5 42 9L38 13Q30 9 26 17Z" fill="#a9c2da" />
    <path d="M4 36Q10 53 30 50Q18 46 15 37Z" fill="#a9c8e6" />
    <path d="M48 23Q60 30 56 45L50 36Q52 29 48 23Z" fill="#a9c2da" />
    <circle cx="41" cy="15.500" r="6.500" fill="url(#gBall)" /><circle cx="10" cy="29.500" r="9" fill="url(#gBall)" />
    <circle cx="33.500" cy="32" r="13" fill="url(#gGreen)" /><circle cx="44" cy="45" r="11" fill="url(#gBall)" />
  </Icon>
);
const Monitor = ({ x = 0, y = 0 }) => (
  <g transform={`translate(${x} ${y})`}>
    <ellipse cx="20" cy="40" rx="13" ry="6" fill="url(#gSilver)" /><path d="M16 30H26L24 39H16Z" fill="#c9cbcd" />
    <path d="M3 0L40 5L36 34L0 29Z" fill="url(#gSilver)" stroke="#a3a6a9" />
    <path d="M5 3L37 7L34 31L3 26Z" fill="url(#gScreen)" />
  </g>
);
const ComputerIcon = () => (
  <Icon w={58} h={60}>
    <path d="M2 24L15 20V46L5 49L2 47Z" fill="url(#gSilver)" stroke="#8d9093" />
    <Monitor x={15} y={12} />
  </Icon>
);
const NetworkIcon = () => (
  <Icon w={58} h={62}>
    <circle cx="24" cy="24" r="23.500" fill="url(#gGlobe)" />
    <path d="M8 8Q18 2 20 10Q12 14 14 20Q8 26 2 20Q2 14 8 8ZM30 2Q40 4 44 14L36 16Q30 10 30 2ZM10 30Q18 30 18 40L14 44Q8 40 10 30Z" fill="#3fae3d" />
    <Monitor x={17} y={15} />
  </Icon>
);

const files: [string, string, React.ReactNode][] = [
  ["库", "系统文件夹", <LibraryIcon />],
  ["家庭组", "系统文件夹", <GroupIcon />],
  ["lkq", "系统文件夹", <FolderIcon kind="user" />],
  ["计算机", "系统文件夹", <ComputerIcon />],
  ["网络", "系统文件夹", <NetworkIcon />],
  ["E-course_skydisk", "文件夹", <FolderIcon kind="docs" />],
  ["hl-bak", "文件夹", <FolderIcon kind="text" />],
  ["math", "文件夹", <FolderIcon kind="dark" />],
  ["数字教材截图方法", "", <FolderIcon kind="photos" />],
  ["数字教材文档", "", <FolderIcon kind="red" />],
];
const FileIconBox = styled.div`
  width: 63px;
  height: 62px;
  flex: none;
  padding-left: 5px;
`;

const DesktopGlyph = () => (
  <><rect x="1" y="2" width="18" height="14" fill="#bccbe0" /><rect x="2" y="3" width="16" height="11.500" fill="url(#gSky)" /><path d="M2 14.500H18" stroke="#2a3f78" strokeWidth="1.500" /><path d="M3 14.500H5" stroke="#6fd36a" strokeWidth="1.500" /></>
);
const Tray = () => <path d="M0 15L4 11H17L20 15L10 18.500Z" fill="#b5daf0" stroke="#86bbdd" strokeWidth=".8" />;
const navItems: { t: string; root?: boolean; on?: boolean; top?: number; i: React.ReactNode }[] = [
  { t: "收藏夹", root: true, i: <path d="M9.500 1L12 7L18.500 7.500L13.500 12L15.500 19L10 15L4.500 18.500L6 12L1 8.500L7 7Z" fill="#f9bd3f" stroke="#eb9a34" strokeWidth=".7" /> },
  { t: "下载", i: <><path d="M3 2L12 1L15 4V17L6 19Z" fill="url(#gBack)" /><path d="M2 2L7 4V19L2 15Z" fill="url(#gFlap)" /><path d="M10 8H14V13H17L12 19L8 13H10Z" fill="#2c8ce0" stroke="#8cc6f4" strokeWidth=".5" /></> },
  { t: "桌面", on: true, i: <DesktopGlyph /> },
  { t: "最近访问的位置", i: <><rect x="7" y="4" width="10" height="8" fill="#d5e1ea" stroke="#8fa0ad" /><path d="M4 12L16 10L19 15L8 18.500Z" fill="#c8d6de" stroke="#93a4ae" /><path d="M8 13L13 11.500" stroke="#3291cf" strokeWidth="3" /><circle cx="5.500" cy="5.500" r="4.500" fill="#eef2f5" stroke="#909ba5" /><path d="M5.500 3V6H8" stroke="#566" /></> },
  { t: "库", root: true, top: 27, i: <><path d="M0 3Q0 1 2 1H8L9 3H20V18H0Z" fill="url(#gFolder)" stroke="#d7b54d" strokeWidth=".7" /><path d="M3 2.500H8M10 4H18" stroke="#fff" strokeWidth="1.500" /><path d="M3 2H5" stroke="#43a648" strokeWidth="1.500" /><path d="M8 3.500H10" stroke="#c6402c" strokeWidth="1.500" /><path d="M2 19V13Q2 11 4 11H16Q18 11 18 13V19H14V16H6V19Z" fill="url(#gBlueTray)" /></> },
  { t: "Subversion", i: <><Tray /><path d="M5 3Q5 1 8 1H12L16 5V14H5Z" fill="#dfe9f6" stroke="#a9bcd4" /><path d="M6 6H12M7 8.500H14M7 11H14" stroke="#7f9bcb" strokeWidth="1.500" /></> },
  { t: "视频", i: <><Tray /><rect x="5" y="0" width="11" height="14" fill="#2d3944" /><rect x="7.500" y="1.500" width="6" height="5" fill="#c76a37" /><rect x="7.500" y="8" width="6" height="5" fill="#3b82ba" /><path d="M6 1V14M15 1V14" stroke="#ccd" strokeDasharray="1 1" /></> },
  { t: "图片", i: <><Tray /><path d="M4 2L15 3V13L4 11Z" fill="#e9f1f7" stroke="#9bb2c5" /><path d="M6 4L13 5V10.500L6 9.500Z" fill="#4b9fbd" /></> },
  { t: "文档", i: <><Tray /><path d="M5 1L13 0L16 3V15L6 13Z" fill="#f5f8fa" stroke="#9fb0be" /><path d="M8 4H12M8 9H13" stroke="#a5b8cc" /><rect x="10" y="5" width="4" height="4" fill="#4c8bc4" /></> },
  { t: "迅雷下载", i: <><Tray /><path d="M6 1H14L17 4V14H6Z" fill="#eaf0f6" stroke="#9fb0be" /><rect x="4.500" y="5.500" width="10" height="8" fill="#7cc6ee" stroke="#5b9cc6" /></> },
  { t: "音乐", i: <><Tray /><path d="M11.500 13V1Q16 3 15 8Q14 5 12.500 5" stroke="#2a74c4" strokeWidth="1.800" /><ellipse cx="9.500" cy="13" rx="3.500" ry="2.500" fill="#1f6bd0" /></> },
];
const isLatin = (s: string) => /^[\w .-]+$/.test(s);

const ScrollGripLines = () => (
  <Icon w={9} h={9}>
    <path d="M0 .5H9M0 4.500H9M0 8.500H9" stroke="#555" />
    <path d="M0 1.500H9M0 5.500H9" stroke="#fff" />
  </Icon>
);
const Scroller = ({ thumb }: { thumb: number }) => (
  <ScrollBar>
    <ScrollArrow><Icon w={9} h={5}><path d="M0 5H9L4.500 0Z" fill="#484848" /></Icon></ScrollArrow>
    <ScrollThumb $h={thumb}><ScrollGripLines /></ScrollThumb>
    <Spacer />
    <ScrollArrow><Icon w={9} h={5}><path d="M0 0H9L4.500 5Z" fill="#555" /></Icon></ScrollArrow>
  </ScrollBar>
);
const AlignIcon = ({ v }: { v: number }) => (
  <Icon w={17} h={17}>
    <path d="M0 2.500H17M0 14.500H17M2.500 0V17M14.500 0V17" stroke="#999" strokeDasharray={v === 1 ? "5 2 3 2 5" : "2 1 11 1 2"} />
    {v === 0 && <path d="M5.500 8.500H11.500M8.500 5.500V11.500" stroke="#ddd" />}
    {v === 1 && <path d="M8.500 4V6M8.500 11V13M4 8.500H6M11 8.500H13" stroke="#ccc" />}
    {v === 2 && <rect x="5.500" y="5.500" width="6" height="6" stroke="#bbb" strokeWidth="1.400" />}
  </Icon>
);
const PageFigure = ({ dark }: { dark?: boolean }) => (
  <Icon w={18} h={18}>
    <path d={dark ? "M1 3H14L17 6V16H1Z" : "M3 1H12L15 4V17H3Z"} fill={dark ? "#9c9c9c" : "#c4c4c4"} />
    <circle cx="9" cy="5.500" r="1.700" fill="none" stroke="#222" /><path d="M6 8.500H12V13H10.500V17H7.500V13H6Z" fill="none" stroke="#222" />
  </Icon>
);
const NewPage = ({ c = "#c8c8c8" }) => (
  <Icon w={11} h={11}><path d="M0 0H11V11H5V6H0Z" fill={c} /><path d="M0 7H4V11Z" fill={c} /></Icon>
);
const Trash = ({ c = "#b5b5b5" }) => (
  <Icon w={11} h={12}><path d="M0 2.500H11M3.500 2V.5H7.500V2M1.500 4V11.500H9.500V4M3.500 4.500V10M5.500 4.500V10M7.500 4.500V10" stroke={c} /></Icon>
);
const DoubleArrow = ({ left }: { left?: boolean }) => (
  <Icon w={8} h={6}><path d={left ? "M4 0V6L0 3ZM8 0V6L4 3Z" : "M0 0V6L4 3ZM4 0V6L8 3Z"} fill="#c8c8c8" /></Icon>
);

const SwatchArea = styled.div`
  height: 110px;
  padding: 3px 0 0 4px;
`;

export default function App() {
  return (
    <Shell>
      <GlobalStyle />
      <Gradients />
      <MenuBar>
        <Logo>Ai</Logo>
        <MenuItem $w={56}>文件(F)</MenuItem>
        <MenuItem $w={56}>编辑(E)</MenuItem>
        <MenuItem $w={60}>对象(O)</MenuItem>
        <MenuItem $w={57}>文字(T)</MenuItem>
        <MenuItem $w={57}>选择(S)</MenuItem>
        <MenuItem $w={58}>效果(C)</MenuItem>
        <MenuItem $w={58}>视图(V)</MenuItem>
        <MenuItem $w={62}>窗口(W)</MenuItem>
        <MenuItem $w={55}>帮助(H)</MenuItem>
        <Divider $m="5px 0 0" />
        <BridgeBadge>Br</BridgeBadge>
        <Slot $w={21} $m="7px 0 0">
          <Icon w={18} h={15}><rect x=".5" y=".5" width="17" height="14" fill="#333" stroke="#d0d0d0" /><path d="M2 2H9V13H2ZM10 2H16V7H10ZM10 8H16V13H10Z" fill="#bdbdbd" /></Icon>
        </Slot>
        <Slot $w={8} $m="13px 0 0"><Tri s={7} /></Slot>
        <Spacer />
        <Divider $m="5px 11px 0 0" />
        <MenuItem $w={57} $lh={26}>基本功能</MenuItem>
        <Slot $w={19} $m="13px 0 0"><Tri s={6} /></Slot>
        <Divider $m="5px 0 0" />
        <SearchBox>
          <Icon w={13} h={13}><circle cx="8" cy="5" r="4" stroke="#444" strokeWidth="1.300" /><path d="M5 8L.5 12.500" stroke="#444" strokeWidth="2" /></Icon>
        </SearchBox>
        <WindowControls>
          <WindowButton $w={28}><Icon w={10} h={12}><rect y="9" width="10" height="3" fill="#e6e6e6" /></Icon></WindowButton>
          <WindowButton $w={27}>
            <Icon w={12} h={11}><rect x="5" y="1" width="6" height="5" stroke="#e6e6e6" strokeWidth="2" /><rect x="1" y="5" width="6" height="5" fill="#444" stroke="#e6e6e6" strokeWidth="2" /></Icon>
          </WindowButton>
          <WindowButton $w={47}><Cross s={9} c="#eee" w={2.4} /></WindowButton>
        </WindowControls>
      </MenuBar>

      <ControlBar>
        <Grip $v />
        <Label $w={93} $pl={7}>画板</Label>
        <Divider $h={25} $m="0 6px 0 0" />
        <Label $w={31}>预设:</Label>
        <Preset>自定<i><Tri s={8} c="#e0e0e0" /></i></Preset>
        <Orient><div><PageFigure /></div><div><PageFigure dark /></div></Orient>
        <Slot $w={32}><NewPage /></Slot>
        <Slot $w={30}><Trash /></Slot>
        <Label $w={32}>名称:</Label>
        <NameField $w={117}>画板 3</NameField>
        <Slot $w={34} $m="0 0 0 12px">
          <DarkButton>
            <Icon w={18} h={18}><path d="M9 1L11 3H7ZM9 17L11 15H7ZM0 9L3 7V11ZM18 9L16 7V11Z" fill="#ddd" /><rect x="9" y="7" width="6" height="5" fill="#ddd" /><circle cx="8" cy="8.500" r="4" fill="#777" stroke="#bbb" strokeWidth="1.500" /></Icon>
          </DarkButton>
        </Slot>
        <Slot $w={26}><AlignIcon v={0} /></Slot>
        <Slot $w={26}><AlignIcon v={1} /></Slot>
        <Slot $w={33}><AlignIcon v={2} /></Slot>
        <Slot $w={25}>
          <Icon w={14} h={14}><rect x=".5" y=".5" width="13" height="13" stroke="#bbb" /><path d="M1 2H13" stroke="#ccc" strokeWidth="2" /><path d="M3 6.500H5M3 10.500H5M6 6.500H12M6 10.500H12" stroke="#ccc" /></Icon>
        </Slot>
        <Slot $w={29}>
          <Icon w={19} h={19}><path d="M2.500 2.500H16.500V16.500H2.500Z" stroke="#999" /><g fill="#484848" stroke="#d5d5d5"><rect x=".5" y=".5" width="4" height="4" /><rect x="7.500" y=".5" width="4" height="4" /><rect x="14.500" y=".5" width="4" height="4" /><rect x=".5" y="7.500" width="4" height="4" /><rect x="14.500" y="7.500" width="4" height="4" /><rect x=".5" y="14.500" width="4" height="4" /><rect x="7.500" y="14.500" width="4" height="4" /><rect x="14.500" y="14.500" width="4" height="4" /></g><rect x="7" y="7" width="5" height="5" fill="#fff" /></Icon>
        </Slot>
        <Label $w={14}>X:</Label>
        <Field $w={57}>308.83 px</Field>
        <Label $w={24} $pl={10}>Y:</Label>
        <Field $w={57}>382.48 px</Field>
        <Label $w={25} $pl={5}>宽:</Label>
        <Field $w={57}>326.88 px</Field>
        <Slot $w={25} $m="0 0 0 9px">
          <Icon w={16} h={17}><path d="M6 5H4A3.500 3.500 0 0 0 4 12H6M10 5H12A3.500 3.500 0 0 1 12 12H10" stroke="#aaa" strokeWidth="2" /><path d="M8 0V4M4 1L6 4M12 1L10 4M8 17V13M4 16L6 13M12 16L10 13" stroke="#bbb" /></Icon>
        </Slot>
        <Label $w={20}>高:</Label>
        <Field $w={57}>76.93 px</Field>
        <Label $w={60} $pl={5}>画板: 2</Label>
        <Spacer />
        <Slot $w={32}>
          <Icon w={15} h={9}><path d="M0 3H6L3 6Z" fill="#d0d0d0" /><path d="M6 .5H8M6 4.500H8M6 8.500H8M9 .500H15M9 4.500H15M9 8.500H15" stroke="#d0d0d0" /></Icon>
        </Slot>
      </ControlBar>

      <Body>
        <ToolColumn>
          <ColumnHead><DoubleArrow /></ColumnHead>
          <GripRow><Grip /></GripRow>
          {tools.map((t, n) =>
            t.rule ? (
              <ToolRule key={n} $h={t.rule} />
            ) : (
              <ToolCell key={n} $on={t.on}>
                <Icon>{t.i}</Icon>
                {t.more && <Corner />}
              </ToolCell>
            )
          )}
          <SwatchArea>
            <Icon w={32} h={110}>
              <rect x="1.500" y="1.500" width="6" height="6" fill="#fff" stroke="#ddd" /><path d="M9 5H11V12H4V9" stroke="#ddd" strokeWidth="1.500" /><rect x="2.500" y="2.500" width="4" height="4" fill="#fff" stroke="#222" />
              <path d="M22 3H25Q28 3 28 8" stroke="#ccc" strokeWidth="1.500" /><path d="M20 3L24 0V6ZM25 7H31L28 11Z" fill="#ccc" />
              <path d="M11 28H29V46H11Z" fill="#fff" stroke="#222" /><path d="M17 34H23V40H17Z" fill="#484848" stroke="#222" /><path d="M11.500 45.500L28.500 28.500" stroke="#f00" strokeWidth="2" />
              <rect x=".5" y="17.500" width="19" height="19" fill="#fff" stroke="#222" />
              <rect x="1.500" y="54" width="27" height="9" fill="#fff" stroke="#222" /><rect x="11" y="54.500" width="8" height="8" fill="url(#gGrey)" /><path d="M10.500 54V63M19.500 54V63" stroke="#222" /><path d="M20.500 62.500L28 54.500" stroke="#f00" strokeWidth="2" />
              <circle cx="14" cy="76" r="4" stroke="#aaa" /><rect x="14" y="76" width="6.500" height="6.500" fill="#b0b0b0" />
              <rect x="12.500" y="95.500" width="11" height="8" fill="#777" stroke="#ccc" /><rect x="7.500" y="99.500" width="10" height="8" fill="#666" stroke="#ccc" />
            </Icon>
          </SwatchArea>
        </ToolColumn>

        <Center>
          <TabStrip>
            <DocTab $w={375}>9570-5 数学教材 ( 七年级下册 ) .pdf* @ 100% (CMYK/预览)<Cross s={6} /></DocTab>
            <DocTab $w={221} $active>未标题-1* @ 100% (CMYK/预览)<Cross s={6} /></DocTab>
          </TabStrip>
          <Stage>
            <Canvas />
            <VScroll><Tri dir="up" s={9} c="#ddd" /><Tri s={9} c="#ddd" /></VScroll>
          </Stage>
          <StatusBar>
            <Slot $w={30} $m="0 0 0 7px">
              <Icon w={19} h={10}><rect width="19" height="10" rx="2" fill="#666" /><circle cx="5" cy="5" r="2.500" stroke="#444" strokeWidth="2" /><path d="M11 3H14V7H17" stroke="#444" strokeWidth="1.500" /></Icon>
            </Slot>
            <Slot $w={25}>
              <Icon w={13} h={11}><path d="M5 2.500H.5V10.500H10.500V7" stroke="#ccc" /><path d="M4 7Q4 3 8 3V0L13 4L8 8V5Q6 5 4 7Z" fill="#ddd" /></Icon>
            </Slot>
            <StatusField>100%</StatusField>
            <DropButton><Tri s={8} c="#ddd" /></DropButton>
            <Slot $w={19} $m="0 0 0 9px"><Icon w={9} h={9}><path d="M0 0H2V9H0ZM8 0V9L3 4.500Z" fill="#ccc" /></Icon></Slot>
            <Slot $w={15}><Tri dir="left" s={9} c="#ccc" /></Slot>
            <StatusField>2</StatusField>
            <DropButton><Tri s={8} c="#ddd" /></DropButton>
            <Slot $w={16} $m="0 0 0 11px"><Tri dir="right" s={9} c="#6e6e6e" /></Slot>
            <Slot $w={17}><Icon w={9} h={9}><path d="M0 0V9L5 4.500ZM6 0H8V9H6Z" fill="#6e6e6e" /></Icon></Slot>
            <Divider $h={15} />
            <Label $w={197} $pl={87}>画板</Label>
            <Divider $h={15} $m="0 6px 0 0" />
            <Slot $w={11}><Tri dir="right" s={9} c="#ccc" /></Slot>
            <HTrack>
              <Tri dir="left" s={9} c="#ddd" />
              <HThumb />
              <Spacer />
              <Tri dir="right" s={9} c="#ddd" />
            </HTrack>
            <Slot $w={17} />
          </StatusBar>
        </Center>

        <Dock>
          <ColumnHead $right><DoubleArrow left /></ColumnHead>
          {dockGroups.map((g, n) => (
            <DockGroup key={n}>
              <DockGrip><Grip /></DockGrip>
              {g.map((c, k) => (
                <DockCell key={k} $on={c.on}><Icon>{c.i}</Icon></DockCell>
              ))}
            </DockGroup>
          ))}
        </Dock>
      </Body>

      <LayersPanel>
        <PanelTabs>
          <PanelTab $w={40} $on>图层</PanelTab>
          <PanelTab $w={38}>画板</PanelTab>
          <Spacer />
          <Icon w={10} h={8}><path d="M0 0V8L5 4ZM5 0V8L10 4Z" fill="#c8c8c8" /></Icon>
          <Divider $h={11} $m="0 4px 0 6px" />
          <Icon w={15} h={9}><path d="M0 3H6L3 6Z" fill="#ccc" /><path d="M6 .5H15M7 3.500H15M7 6.500H15M6 9H15" stroke="#ccc" /></Icon>
        </PanelTabs>
        <LayerList>
          <LayerRow>
            <LayerCol $w={20} $line>
              <Icon w={13} h={9}><path d="M.5 5Q6.500 -2 12.500 5Q6.500 10 .5 5Z" fill="#8d979f" stroke="#d0d0d0" /><circle cx="6.500" cy="4.500" r="2.200" fill="#2e2e2e" /></Icon>
            </LayerCol>
            <LayerCol $w={22} $line />
            <LayerColor />
            <LayerCol $w={16}><Tri dir="right" s={8} c="#eee" /></LayerCol>
            <LayerCol $w={5} />
            <Thumb />
            <LayerName>图层 1</LayerName>
            <LayerCol $w={7} $line />
            <LayerCol $w={19}><Icon w={9} h={9}><circle cx="4.500" cy="4.500" r="3.800" stroke="#bbb" strokeWidth="1.300" /></Icon></LayerCol>
            <Spacer />
            <Icon w={5} h={20}><path d="M0 0H5V5Z" fill="#ddd" /></Icon>
          </LayerRow>
        </LayerList>
        <PanelFoot>
          <Label $w={91}>1 个图层</Label>
          <Slot $w={26}><Icon w={12} h={11}><circle cx="7" cy="4.500" r="3.800" stroke="#6e6e6e" strokeWidth="1.400" /><path d="M4 7L0 11" stroke="#6e6e6e" strokeWidth="2" /></Icon></Slot>
          <Slot $w={25}><Icon w={11} h={10}><rect x=".5" y=".5" width="7" height="7" stroke="#6e6e6e" /><rect x="3.500" y="3.500" width="7" height="6" stroke="#6e6e6e" /></Icon></Slot>
          <Slot $w={27}><Icon w={14} h={10}><path d="M0 1H3V4H6M5 2L7 4L5 6" stroke="#ccc" /><path d="M6 1H14V10H11V6H8L6 3Z" fill="#ccc" /><path d="M7 7H10V10Z" fill="#ccc" /></Icon></Slot>
          <Slot $w={26}><NewPage /></Slot>
          <Slot $w={28}><Trash c="#6e6e6e" /></Slot>
          <Icon w={9} h={9}><path d="M8 0V9M6 2V9M4 4V9M2 6V9M0 8V9" stroke="#151515" strokeDasharray="1 1" /></Icon>
        </PanelFoot>
        <PanelGrip><Grip /></PanelGrip>
      </LayersPanel>

      <Dialog>
        <TitleRow>
          <AppBadge>Ai</AppBadge>
          <TitleText>导出</TitleText>
          <CloseButton>
            <Icon w={15} h={13}><path d="M3 1L12 12M12 1L3 12" stroke="#4b3a47" strokeWidth="5" /><path d="M3.500 1.500L11.500 11.500M11.500 1.500L3.500 11.500M1.500 1.500H5.500M9.500 1.500H13.500M1.500 11.500H5.500M9.500 11.500H13.500" stroke="#fff" strokeWidth="2.200" /></Icon>
          </CloseButton>
        </TitleRow>
        <NavRow>
          <Icon w={89} h={34}>
            <path d="M22 1Q40 4 58 1Q75 1 75 17Q74 33 58 33Q40 30 22 33Q6 32 6 17Q7 2 22 1Z" fill="#8797a6" stroke="#b4bfc9" opacity=".6" />
            <circle cx="22" cy="17" r="15" fill="url(#gBackBtn)" stroke="#dbe6f0" /><path d="M13 17L21.500 9.500M13 17L21.500 24.500M13 17H31" stroke="#fff" strokeWidth="4.500" />
            <circle cx="58" cy="17" r="14.500" fill="url(#gFwdBtn)" stroke="#5f6a75" /><path d="M67 17L58.500 9.500M67 17L58.500 24.500M67 17H49" stroke="#8a929a" strokeWidth="5.500" /><path d="M66.500 17L58.500 10M66.500 17L58.500 24M67 17H49.500" stroke="#d5d9dd" strokeWidth="4" />
            <path d="M77 14.500H86L81.500 20Z" fill="#3c8fe0" stroke="#13337a" />
          </Icon>
          <Address>
            <Icon><DesktopGlyph /></Icon>
            <AddressText>桌面</AddressText>
            <Tri dir="right" s={9} c="#000" />
            <Spacer />
            <Slot $w={15}><Tri s={9} c="#0a0a55" /></Slot>
            <Refresh>
              <Icon w={17} h={16}><path d="M7 1Q3 3 4.500 8" stroke="#2a78bd" strokeWidth="2.400" /><path d="M0 6H9L4.500 11Z" fill="#2a86cd" /><path d="M11 15Q14 13 12.500 8" stroke="#1f5ea5" strokeWidth="2.400" /><path d="M8 10H17L12.500 5Z" fill="#1f66b1" /></Icon>
            </Refresh>
          </Address>
          <SearchField>
            搜索 桌面
            <Icon w={15} h={15}><circle cx="9" cy="5.500" r="4.500" stroke="#3b7cc0" strokeWidth="2" /><path d="M6 9L1 14" stroke="#2c5f9f" strokeWidth="3" /></Icon>
          </SearchField>
        </NavRow>
        <Client>
          <CommandBar>
            <Slot $w={36}>组织</Slot>
            <Slot $w={44}><Tri s={7} c="#1e395b" /></Slot>
            <Slot $w={723}>新建文件夹</Slot>
            <Slot $w={33}>
              <Icon w={20} h={19}><rect x=".5" y=".5" width="8" height="7" fill="#fff" stroke="#7d8a96" /><rect x=".5" y="10.500" width="8" height="8" fill="#fff" stroke="#7d8a96" /><path d="M2 5H7" stroke="#38a0a0" strokeWidth="2" /><path d="M2 14H5" stroke="#48a848" strokeWidth="3" /><path d="M5 14H7" stroke="#d0703a" strokeWidth="3" /><path d="M12 2.500H20M12 6H17M12 12.500H20M12 16H17" stroke="#5c6b7a" /></Icon>
            </Slot>
            <Slot $w={45}><Tri s={7} c="#1e395b" /></Slot>
            <Icon w={21} h={21}>
              <circle cx="10.500" cy="10.500" r="9.500" fill="#2444a8" stroke="#99a6b8" strokeWidth="1.600" />
              <path d="M2 10Q3 2 10.500 2Q18 2 19 10Z" fill="#6c8bd4" opacity=".6" />
              <text x="10.500" y="16" textAnchor="middle" fontFamily="Open Sans" fontWeight="700" fontSize="15" fill="#fff">?</text>
            </Icon>
          </CommandBar>
          <Explorer>
            <NavPane>
              {navItems.map((n) => (
                <NavItem key={n.t} $root={n.root} $on={n.on} $top={n.top}>
                  <Icon>{n.i}</Icon>
                  <Name $latin={isLatin(n.t)}>{n.t}</Name>
                </NavItem>
              ))}
            </NavPane>
            <Scroller thumb={147} />
            <FilePane>
              {files.map(([name, kind, icon]) => (
                <FileItem key={name}>
                  <FileIconBox>{icon}</FileIconBox>
                  <FileText><Name $latin={isLatin(name)}>{name}</Name><Kind>{kind}</Kind></FileText>
                </FileItem>
              ))}
            </FilePane>
            <Scroller thumb={259} />
          </Explorer>
          <Form>
            <FormRow>
              <FormLabel>文件名(N):</FormLabel>
              <Combo>P54.png<Tri s={10} c="#000" /><Mark $x={0} $y={-3} $w={215} $h={32} /></Combo>
            </FormRow>
            <FormRow>
              <FormLabel>保存类型(T):</FormLabel>
              <Combo $shaded>PNG (*.PNG)<Tri s={10} c="#000" /><Mark $x={-2} $y={1} $w={217} $h={29} /></Combo>
            </FormRow>
            <Options>
              <Option $h={28}>
                <Icon w={16} h={16}><rect x=".5" y=".5" width="15" height="15" fill="#f4f4f4" stroke="#8e8f8f" /><rect x="2.500" y="2.500" width="11" height="11" fill="#dfe3ea" stroke="#b8bcc4" /><path d="M4.500 7.500L7 11L11.500 3.500" stroke="#3b4f96" strokeWidth="2" /></Icon>
                使用画板
                <Mark $x={-10} $y={-3} $w={112} $h={30} />
              </Option>
              <Option $h={26}>
                <Icon w={16} h={16}><circle cx="8" cy="8" r="7.500" fill="#f4f4f4" stroke="#8e8f8f" /><circle cx="8" cy="8" r="4.500" fill="url(#gRadio)" /></Icon>
                全部
              </Option>
              <Option $h={27}>
                <Icon w={16} h={16}><circle cx="8" cy="8" r="7.500" fill="#f4f4f4" stroke="#8e8f8f" /><circle cx="8" cy="8" r="5" fill="#e0e0e0" stroke="#c4c4c4" /></Icon>
                范围:
              </Option>
              <RangeInput>1-2</RangeInput>
            </Options>
            <Actions>
              <HideToggle>
                <Icon w={17} h={17}><circle cx="8.500" cy="8.500" r="8" fill="#e6eaf0" stroke="#9fa9b5" /><path d="M4 10.500H13L8.500 6Z" fill="#1d3b7a" /></Icon>
                隐藏文件夹
              </HideToggle>
              <PushButton $primary>导出</PushButton>
              <PushButton>取消</PushButton>
            </Actions>
            <SizeGrip>
              <Icon w={11} h={11}><path d="M8 0H10V2H8ZM8 4H10V6H8ZM4 4H6V6H4ZM8 8H10V10H8ZM4 8H6V10H4ZM0 8H2V10H0Z" fill="#b4b4b4" /></Icon>
            </SizeGrip>
          </Form>
        </Client>
      </Dialog>
    </Shell>
  );
}
